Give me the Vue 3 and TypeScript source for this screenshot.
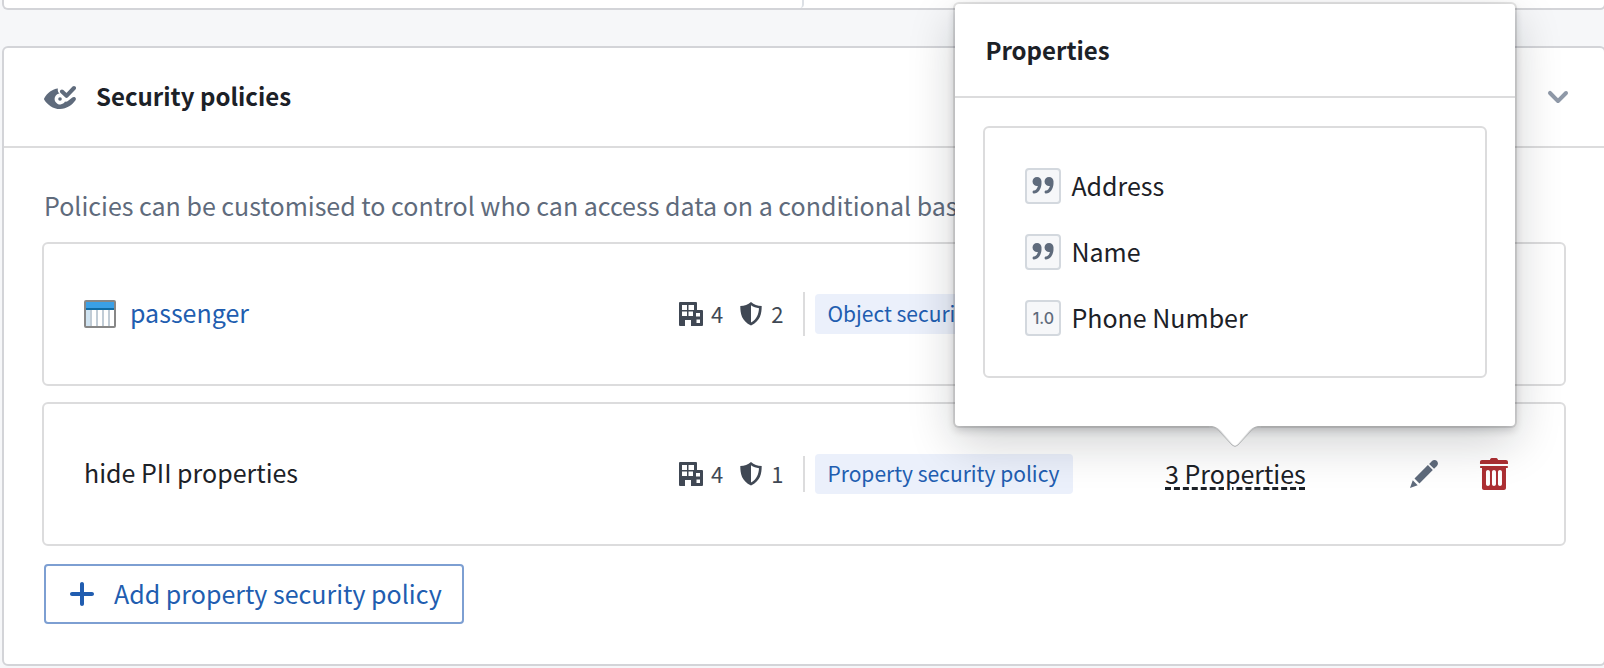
<script setup lang="ts">
import { ref } from 'vue'

interface Policy {
  id: string
  name: string
  isDatasource: boolean
  organizations: number
  markings: number
  kind: string
}

interface Property {
  name: string
  type: 'string' | 'double'
}

const policies: Policy[] = [
  { id: 'object', name: 'passenger', isDatasource: true, organizations: 4, markings: 2, kind: 'Object security policy' },
  { id: 'pii', name: 'hide PII properties', isDatasource: false, organizations: 4, markings: 1, kind: 'Property security policy' },
]

const properties: Property[] = [
  { name: 'Address', type: 'string' },
  { name: 'Name', type: 'string' },
  { name: 'Phone Number', type: 'double' },
]

const popoverOpen = ref(true)
</script>

<template>
  <main class="page">
    <section class="card card-previous">
      <div class="previous-pane"></div>
    </section>

    <section class="card">
      <header class="card-header">
        <svg class="icon-lg muted" viewBox="0 0 32 32" aria-hidden="true">
          <path
            fill-rule="evenodd"
            d="M14 7.600C8.500 8 3 12.200.4 17c-.5.7-.5 1.200 0 1.900C3.200 23.300 9 28 16 28c6.800 0 12.600-4.600 15.500-8.800.7-1.200.5-2.400-.5-3-1-.6-2.100-.3-3 .5l-4.500 3.600c-.8.6-1.700.6-2.500.2A5.500 5.500 0 1 1 15.500 12.500C14 11.300 13.400 9.600 14 7.600z"
          />
          <circle cx="16" cy="18" r="1.800" />
          <path d="M18 10.500l4.500 4.300L30 7" fill="none" stroke="currentColor" stroke-width="4" stroke-linecap="round" stroke-linejoin="round" />
        </svg>
        <h2 class="card-title"><span class="label">Security policies</span></h2>
        <button class="icon-button chevron" type="button" aria-label="Collapse section">
          <svg class="icon-lg" viewBox="0 0 16 16" aria-hidden="true">
            <path d="M12 5c-.28 0-.53.11-.71.29L8 8.590l-3.290-3.300a1.003 1.003 0 00-1.420 1.420l4 4c.18.18.43.29.71.29s.53-.11.71-.29l4-4A1.003 1.003 0 0012 5z" />
          </svg>
        </button>
      </header>

      <div class="card-body">
        <p class="description">Policies can be customised to control who can access data on a conditional basis.</p>

        <ul class="policies">
          <li v-for="policy in policies" :key="policy.id" class="policy">
            <a v-if="policy.isDatasource" class="policy-name policy-link" href="#passenger">
              <svg class="icon-lg" viewBox="0 0 32 32" aria-hidden="true">
                <rect x="1" y="3" width="30" height="26" rx="1" fill="#fff" />
                <rect x="2" y="4" width="28" height="6" fill="#3ba0e6" />
                <rect x="2" y="10" width="28" height="2" fill="#106ba3" />
                <rect x="2" y="12" width="4" height="16" fill="#cfe3f1" />
                <path d="M7 12v16M13 12v16M19 12v16M25 12v16" stroke="#c1ccd6" stroke-width="2" />
                <rect x="1" y="3" width="30" height="26" rx="1" fill="none" stroke="#878787" stroke-width="2" />
              </svg>
              <span class="label">{{ policy.name }}</span>
            </a>
            <span v-else class="policy-name"><span class="label">{{ policy.name }}</span></span>

            <div class="summary">
              <span class="count">
                <svg class="icon-md" viewBox="0 0 24 24" aria-hidden="true">
                  <path
                    fill-rule="evenodd"
                    d="M1 0h16a1 1 0 0 1 1 1v7h5a1 1 0 0 1 1 1v14a1 1 0 0 1-1 1H12v-6H6v6H1a1 1 0 0 1-1-1V1a1 1 0 0 1 1-1zM3 3v5h5V3zM9.500 3v5h5.500V3zM3 9.500v4.500h5V9.500zM9.500 9.500v4.500h4.500V9.500zM17 11v3.500h4v-3.500zM17.500 17.500v3.500h3.500v-3.500z"
                  />
                </svg>
                <span class="label">{{ policy.organizations }}</span>
              </span>
              <span class="count">
                <svg class="icon-md" viewBox="0 0 24 24" aria-hidden="true">
                  <path fill-rule="evenodd" d="M12 0C9 2.600 5.500 3.800 1.300 4c0 7.500 1.200 15 10.700 19.500C21.500 19 22.700 11.500 22.700 4 18.500 3.800 15 2.600 12 0zM12 3.200c2.500 1.700 5 2.600 8 3 -.4 5.800-2 10.800-8 14.300z" />
                </svg>
                <span class="label">{{ policy.markings }}</span>
              </span>
              <span class="tag-group" :class="{ 'tag-group-tall': policy.isDatasource }">
                <span class="tag"><span class="label">{{ policy.kind }}</span></span>
              </span>
            </div>

            <template v-if="!policy.isDatasource">
              <div class="property-cell">
                <button
                  class="property-count"
                  type="button"
                  :aria-expanded="popoverOpen"
                  aria-controls="properties-popover"
                  @click="popoverOpen = !popoverOpen"
                >
                  {{ properties.length }} Properties
                </button>

                <div v-if="popoverOpen" id="properties-popover" class="popover" role="dialog" aria-labelledby="popover-title">
                  <h3 id="popover-title" class="popover-title">Properties</h3>
                  <div class="popover-body">
                    <ul class="properties">
                      <li v-for="property in properties" :key="property.name" class="property">
                        <span class="type-badge">
                          <svg v-if="property.type === 'string'" class="icon-md" viewBox="0 0 16 16" aria-hidden="true">
                            <path d="M15.020 5c0-1.660-1.340-3-3-3s-3 1.340-3 3a2.996 2.996 0 003.600 2.940C12.100 9.760 11.140 11 10.020 11c-.55 0-1 .45-1 1s.45 1 1 1c2.760 0 5-3.130 5-7 0-.16-.02-.31-.04-.46.02-.17.04-.36.04-.54zm-11-3c-1.660 0-3 1.340-3 3a2.996 2.996 0 003.600 2.940C4.100 9.760 3.140 11 2.020 11c-.55 0-1 .45-1 1s.45 1 1 1c2.760 0 5-3.130 5-7 0-.16-.02-.32-.04-.46.02-.17.04-.36.04-.54 0-1.660-1.340-3-3-3z" />
                          </svg>
                          <template v-else>1.0</template>
                        </span>
                        <span class="label">{{ property.name }}</span>
                      </li>
                    </ul>
                  </div>
                  <svg class="popover-arrow" viewBox="0 0 52 22" aria-hidden="true">
                    <path d="M0 0c6 0 9 2 12 5l12 13.500q2 2 4 0l12-13.500c3-3 6-5 12-5z" fill="#fff" />
                    <path d="M0 1c6 0 8 2 11 5l12 13q3 3 6 0l12-13c3-3 5-5 11-5" fill="none" stroke="#b4b6b7" />
                  </svg>
                </div>
              </div>

              <div class="actions">
                <button class="icon-button muted" type="button" aria-label="Edit policy">
                  <svg class="icon-lg" viewBox="0 0 16 16" aria-hidden="true">
                    <path d="M3.250 10.260l2.470 2.470 6.690-6.690-2.460-2.480-6.700 6.700zM.99 14.990l3.860-1.390-2.460-2.440L.99 14.990zm12.250-14c-.48 0-.92.2-1.240.51l-1.440 1.440 2.470 2.470 1.440-1.440c.32-.32.51-.75.51-1.240.01-.95-.77-1.740-1.740-1.740z" />
                  </svg>
                </button>
                <button class="icon-button danger" type="button" aria-label="Delete policy">
                  <svg class="icon-lg" viewBox="0 0 16 16" aria-hidden="true">
                    <path d="M14.490 3.990h-13c-.28 0-.5.22-.5.5s.22.5.5.5h.5v10c0 .55.45 1 1 1h10c.55 0 1-.45 1-1v-10h.5c.28 0 .5-.22.5-.5s-.22-.5-.5-.5zm-8.500 9c0 .55-.45 1-1 1s-1-.45-1-1v-6c0-.55.45-1 1-1s1 .45 1 1v6zm3 0c0 .55-.45 1-1 1s-1-.45-1-1v-6c0-.55.45-1 1-1s1 .45 1 1v6zm3 0c0 .55-.45 1-1 1s-1-.45-1-1v-6c0-.55.45-1 1-1s1 .45 1 1v6zm2-12h-4c0-.55-.45-1-1-1h-2c-.55 0-1 .45-1 1h-4c-.55 0-1 .45-1 1v1h14v-1c0-.55-.45-1-1-1z" />
                  </svg>
                </button>
              </div>
            </template>
          </li>
        </ul>

        <button class="add-button" type="button">
          <svg class="icon-lg" viewBox="0 0 16 16" aria-hidden="true">
            <path d="M13 7H9V3c0-.55-.45-1-1-1s-1 .45-1 1v4H3c-.55 0-1 .45-1 1s.45 1 1 1h4v4c0 .55.45 1 1 1s1-.45 1-1V9h4c.55 0 1-.45 1-1s-.45-1-1-1z" />
          </svg>
          <span class="label">Add property security policy</span>
        </button>
      </div>
    </section>
  </main>
</template>

<style>
body {
  margin: 0;
  background: #f6f7f9;
}
</style>

<style scoped>
.page {
  display: flex;
  flex-direction: column;
  gap: 36px;
  padding-left: 2px;
  overflow: hidden;
  color: #1c2127;
  font-family: "Noto Sans CJK SC", "Noto Sans", sans-serif;
  font-size: 25px;
  line-height: 36px;
}

.card {
  margin-right: -2px;
  border: 2px solid #d3d4d8;
  border-radius: 6px;
  background: #fff;
}

.card-previous {
  border-top: 0;
  border-radius: 0 0 6px 6px;
}

.previous-pane {
  box-sizing: border-box;
  width: 50%;
  height: 8px;
  border-right: 2px solid #dce0e5;
  border-bottom-right-radius: 4px;
}

.card-header {
  display: flex;
  align-items: center;
  gap: 20px;
  padding: 19px 16px 19px 40px;
  border-bottom: 2px solid #dcdcdd;
}

.card-title,
.popover-title {
  margin: 0;
  font-size: 24px;
  font-weight: 700;
}

/* The font's tall ascent leaves text low in its line box. */
.label {
  display: block;
  padding-bottom: 2px;
  line-height: 34px;
}

.icon-lg,
.icon-md {
  display: block;
  flex: none;
  fill: currentColor;
}

.icon-lg {
  width: 32px;
  height: 32px;
}

.icon-md {
  width: 24px;
  height: 24px;
}

.muted {
  color: #5f6b7c;
}

.danger {
  color: #ac2f33;
}

.icon-button {
  display: flex;
  align-items: center;
  justify-content: center;
  width: 60px;
  height: 60px;
  padding: 0;
  border: 0;
  background: none;
  cursor: pointer;
}

.chevron {
  margin-left: auto;
  color: #8f99a8;
}

.card-body {
  padding: 39px 38px 40px;
}

.description {
  margin: 0 0 19px;
  padding-left: 2px;
  color: #5f6b7c;
}

.policies,
.properties {
  margin: 0;
  padding: 0;
  list-style: none;
}

.policies {
  display: grid;
  gap: 16px;
}

.policy {
  display: grid;
  grid-template-columns: minmax(0, 1fr) 486px 229px 130px;
  align-items: center;
  min-height: 140px;
  padding: 0 40px;
  border: 2px solid #dcdcdd;
  border-radius: 6px;
}

.policy-name {
  display: flex;
  align-items: center;
  gap: 14px;
}

.policy-name .label {
  padding-bottom: 4px;
  line-height: 32px;
}

.policy-link {
  color: #215db0;
  text-decoration: none;
}

.summary {
  display: flex;
  align-items: center;
  gap: 16px;
  color: #404854;
  font-size: 22px;
}

.count {
  display: flex;
  align-items: center;
  gap: 8px;
}

.tag-group {
  display: flex;
  align-items: center;
  height: 36px;
  margin-left: 4px;
  padding-left: 10px;
  border-left: 2px solid #dcdcdd;
}

.tag-group-tall {
  height: 44px;
}

.tag {
  padding: 2px 14px 2px 12px;
  border-radius: 4px;
  background: #ebf0fb;
  color: #215db0;
  font-size: 21px;
  white-space: nowrap;
}

.property-cell {
  position: relative;
  justify-self: start;
}

.property-count {
  display: block;
  padding: 0 0 2px;
  border: 0;
  background: none;
  color: inherit;
  font: inherit;
  line-height: 34px;
  text-decoration: underline dashed 3px;
  text-underline-offset: 3px;
  cursor: pointer;
}

.popover {
  position: absolute;
  bottom: 66px;
  left: 50%;
  width: 560px;
  border-radius: 4px;
  background: #fff;
  box-shadow: 0 0 0 2px rgba(17, 20, 24, 0.1), 0 4px 8px rgba(17, 20, 24, 0.2), 0 16px 48px rgba(17, 20, 24, 0.2);
  transform: translateX(-50%);
}

.popover-title {
  padding: 28px 30px;
  border-bottom: 2px solid #dcdcdd;
}

.popover-body {
  padding: 28px 28px 48px;
}

.properties {
  display: grid;
  gap: 30px;
  padding: 40px;
  border: 2px solid #dcdcdd;
  border-radius: 6px;
}

.property {
  display: flex;
  align-items: center;
  gap: 10px;
}

.type-badge {
  display: flex;
  align-items: center;
  justify-content: center;
  box-sizing: border-box;
  width: 36px;
  height: 36px;
  border: 2px solid #d3d8de;
  border-radius: 4px;
  background: #f6f7f9;
  color: #5f6b7c;
  font-family: Inter, "Liberation Sans", sans-serif;
  font-size: 16px;
  font-weight: 500;
}

.popover-arrow {
  position: absolute;
  top: 100%;
  left: 50%;
  width: 52px;
  height: 22px;
  transform: translateX(-50%);
}

.actions {
  display: flex;
  gap: 10px;
}

.add-button {
  display: flex;
  align-items: center;
  gap: 16px;
  margin: 18px 0 0 2px;
  padding: 10px 20px;
  border: 2px solid #7d9fd2;
  border-radius: 4px;
  background: #fff;
  color: #215db0;
  font: inherit;
  cursor: pointer;
}
</style>
